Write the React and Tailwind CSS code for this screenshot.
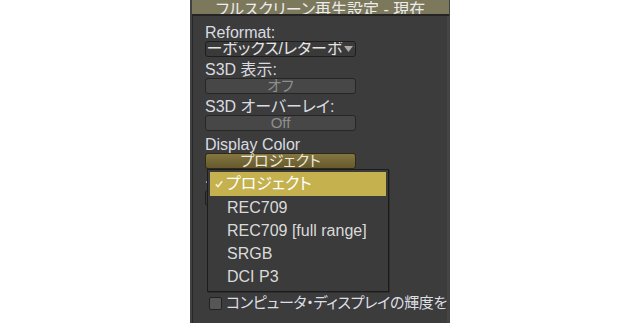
import React from "react";

const font = {
  fontFamily: '"Liberation Sans", "Noto Sans CJK JP", sans-serif',
};

function Label({ children, className = "" }) {
  return (
    <div className={"h-[21px] pt-[5px] leading-[16px] text-[16px] text-[#d8dbe0] whitespace-nowrap " + className}>
      {children}
    </div>
  );
}

function GreyButton({ children }) {
  return (
    <div className="h-[16px] w-[151px] rounded-[3px] border border-[#262626] bg-[#474747] flex items-center justify-center text-[15px] leading-[14px] text-[#8e8e8e] overflow-hidden">
      {children}
    </div>
  );
}

export default function App() {
  return (
    <div className="w-[640px] h-[323px] bg-white overflow-hidden" style={font}>
      <div className="ml-[190px] w-[260px] h-[323px] bg-[#424242] pl-[2px] flex flex-col [font-feature-settings:'palt']">
        {/* title bar */}
        <div className="h-[14px] w-[257px] bg-[#7c785c] overflow-hidden flex justify-center">
          <div className="pt-[2px] leading-[16px] text-[16px] text-[#ececec] whitespace-nowrap">
            フルスクリーン再生設定 - 現在
          </div>
        </div>
        <div className="h-[2px] w-[257px] bg-[#242424]" />
        {/* body */}
        <div className="relative flex-1 w-[257px] overflow-hidden bg-[#3c3c3c] border-l border-[#272727] border-r-[2px] border-r-[#454545] pl-[12px] pt-[4px] flex flex-col">
          <Label>Reformat:</Label>
          <div className="relative h-[16px] w-[151px] rounded-[3px] border border-[#1e1e1e] bg-[#3a3a3a] overflow-hidden flex justify-center">
            <span className="text-[16px] leading-[14px] text-[#e4e4e4] whitespace-nowrap">
              ピラーボックス/レターボックス
            </span>
            <div className="absolute right-[1px] top-0 h-[14px] w-[11px] bg-[#3a3a3a] flex items-center justify-center">
              <svg width="9" height="7" viewBox="0 0 9 7">
                <path d="M0 0 H9 L4.5 6 Z" fill="#a8a8a8" />
              </svg>
            </div>
          </div>

          <Label>S3D 表示:</Label>
          <GreyButton>オフ</GreyButton>

          <Label>S3D オーバーレイ:</Label>
          <GreyButton>Off</GreyButton>

          <Label className="h-[22px] pt-[6px]">Display Color</Label>
          <div className="h-[16px] w-[151px] rounded-[3px] border border-[#2e2a17] bg-gradient-to-b from-[#847741] to-[#66592c] flex items-center justify-center text-[15px] leading-[14px] text-[#efeadb]">
            プロジェクト
          </div>

          <Label>インターレース:</Label>
          <div className="h-[16px] w-[151px] rounded-[3px] border border-[#1e1e1e] bg-[#3a3a3a]" />

          <div className="mt-[88px] h-[18px] flex items-center gap-[4px] pl-[4px]">
            <div className="w-[13px] h-[13px] rounded-[2px] border border-[#222] bg-[#565656] shrink-0" />
            <span className="text-[15px] leading-[16px] tracking-[-0.3px] text-[#dcdfe4] whitespace-nowrap">
              コンピュータ・ディスプレイの輝度を
            </span>
          </div>

          {/* dropdown menu */}
          <div className="absolute left-[14px] top-[153px] w-[182px] h-[123px] border border-[#1c1c1c] bg-[#3b3b3b] p-[2px] flex flex-col shadow-[1px_1px_0_#2e2e2e]">
            <div className="h-[24px] bg-[#c5b24f] flex items-center text-[16px] text-white">
              <div className="w-[16px] flex justify-center pl-[2px]">
                <svg width="8" height="8" viewBox="0 0 8 8">
                  <path d="M0.8 4.4 L3 6.6 L7.2 1.2" stroke="#f4f0dc" strokeWidth="1.6" fill="none" />
                </svg>
              </div>
              <span className="leading-[16px]">プロジェクト</span>
            </div>
            {["REC709", "REC709 [full range]", "SRGB", "DCI P3"].map((t) => (
              <div key={t} className="h-[23px] leading-[23px] pl-[17px] text-[16px] text-[#dadada] whitespace-nowrap">
                {t}
              </div>
            ))}
          </div>
        </div>
      </div>
    </div>
  );
}
